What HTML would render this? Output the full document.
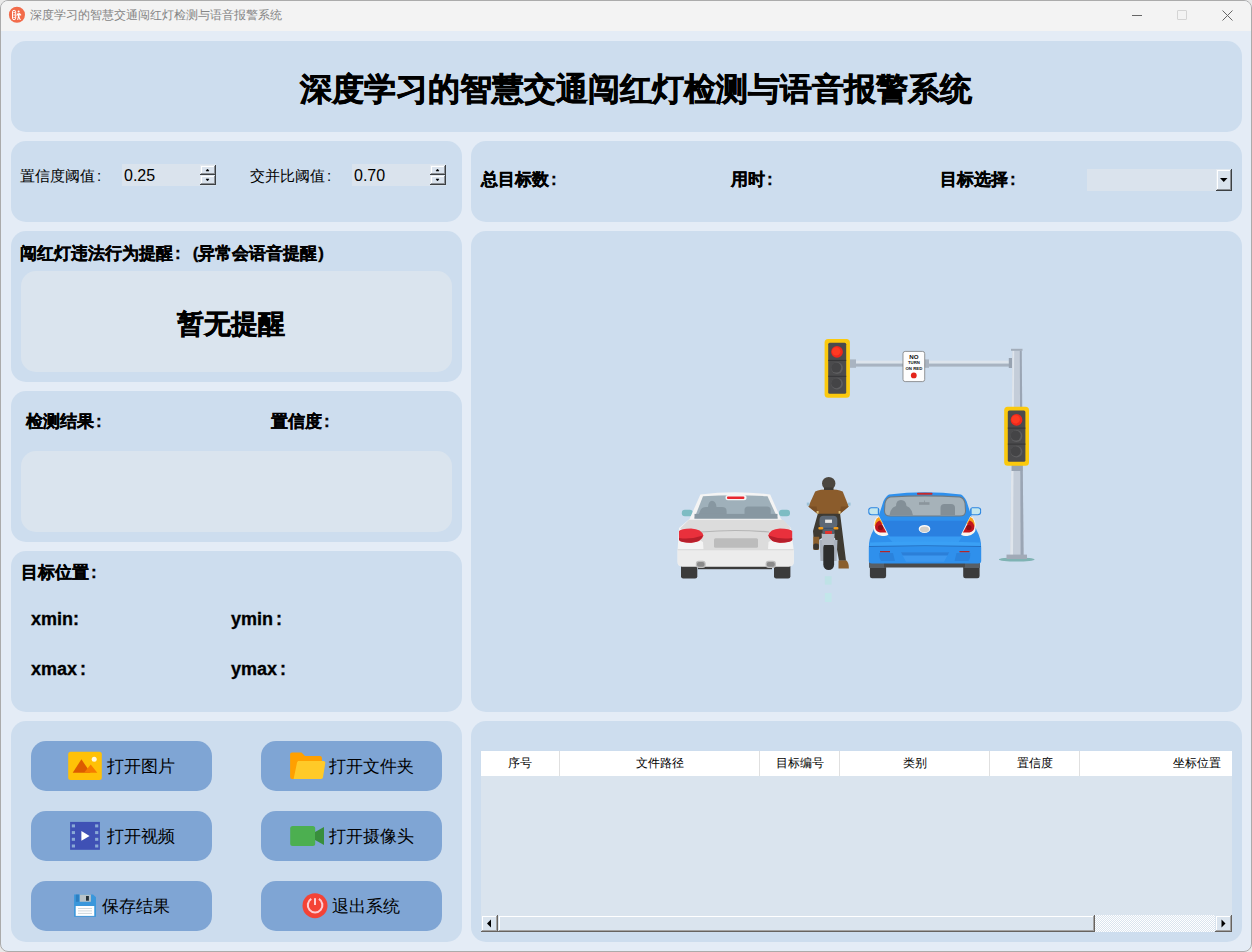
<!DOCTYPE html>
<html><head><meta charset="utf-8">
<style>
*{box-sizing:border-box;margin:0;padding:0}
html,body{width:1252px;height:952px;overflow:hidden;background:#e9e9e9}
body{font-family:"Liberation Sans",sans-serif;position:relative;color:#000}
.win{position:absolute;left:0;top:0;width:1252px;height:952px;border:1px solid #ababab;border-radius:8px;background:#e4ecf6;overflow:hidden}
.titlebar{position:absolute;left:0;top:0;width:1250px;height:30px;background:#f3f3f3}
.ab{position:absolute}
.panel{position:absolute;background:#cdddee;border-radius:15px}
.inner{position:absolute;background:#dae4ee;border-radius:15px}
.lbl{position:absolute;white-space:nowrap;line-height:1}
.b{font-weight:bold;-webkit-text-stroke:0.3px #000}
.c{margin-left:2px}
.btn{position:absolute;width:181px;height:50px;background:#7fa5d4;border-radius:15px}

.spin{position:absolute;width:94px;height:22px;background:#dae3ed}
.spin span{position:absolute;left:2px;top:4px;font-size:16px;line-height:1}
.combo{position:absolute;width:145px;height:22px;background:#dae3ed}
.bt{font-size:17px}
.thead{position:absolute;left:0;top:0;width:832px;height:25px;background:#fff}
.th{position:absolute;top:0;height:25px;font-size:12px;line-height:25px;text-align:center;border-right:1px solid #e0e0e0}
.hscroll{position:absolute;left:481px;top:915px;width:751px;height:17px;background-color:#fff;background-image:linear-gradient(45deg,#dae4ee 25%,transparent 25%,transparent 75%,#dae4ee 75%),linear-gradient(45deg,#dae4ee 25%,transparent 25%,transparent 75%,#dae4ee 75%);background-size:2px 2px;background-position:0 0,1px 1px}
.sbtn{position:absolute;top:0;width:17px;height:17px;background:#dae4ee;box-shadow:inset -1px -1px #67635f,inset 1px 1px #dae4ee,inset -2px -2px #a3a3a3,inset 2px 2px #fff}
.thumb{position:absolute;left:17px;top:0;width:597px;height:17px;background:#dae4ee;box-shadow:inset -1px -1px #67635f,inset 1px 1px #dae4ee,inset -2px -2px #a3a3a3,inset 2px 2px #fff}
.w3d{position:absolute;background:#dae3ed;box-shadow:inset -1px -1px #3c4043,inset 1px 1px #e2e9f0,inset -2px -2px #8d9196,inset 2px 2px #fff}
.sb{position:absolute;left:78px;width:16px;height:11px}
</style></head><body>
<div class="win">
  <div class="titlebar">
    <svg class="ab" style="left:-1px;top:-1px" width="40" height="30"><circle cx="16.95" cy="14.75" r="8.05" fill="#f26b4a"/><rect x="12.5" y="10.3" width="3.2" height="9.4" rx="1.6" fill="none" stroke="#fff" stroke-width="1"/><g fill="#fff"><circle cx="14.1" cy="12.6" r=".75"/><circle cx="14.1" cy="15" r=".75"/><circle cx="14.1" cy="17.4" r=".75"/><circle cx="18.6" cy="11.4" r="1"/><path d="M17.2 13.6l2.6-.5 1.6 1.9-.7.7-1-.9-.3 2 1.5 3.2h-1.1l-1.1-2.2-.5 2.2h-1l.7-3.4v-1.6l-.9.9-.6-.5z"/></g></svg>
    <div class="lbl" style="left:29px;top:8px;font-size:12px;color:#858585">深度学习的智慧交通闯红灯检测与语音报警系统</div>
    <div class="ab" style="left:1131px;top:14px;width:10px;height:1px;background:#666"></div>
    <div class="ab" style="left:1176px;top:9px;width:10px;height:10px;border:1px solid #d4d4d4;border-radius:1px"></div><svg class="ab" style="left:1221px;top:9px" width="12" height="12"><path d="M.5 .5L10.5 10.5M10.5 .5L.5 10.5" stroke="#666" stroke-width="1"/></svg>
  </div>
</div>
<div class="panel" style="left:11px;top:41px;width:1231px;height:91px"></div>
<div class="lbl b" style="left:300px;top:73px;font-size:32px;-webkit-text-stroke:0.6px #000">深度学习的智慧交通闯红灯检测与语音报警系统</div>

<div class="panel" style="left:11px;top:141px;width:451px;height:81px"></div>
<div class="panel" style="left:471px;top:141px;width:771px;height:81px"></div>
<div class="panel" style="left:11px;top:231px;width:451px;height:151px"></div>
<div class="inner" style="left:21px;top:271px;width:431px;height:101px"></div>
<div class="panel" style="left:11px;top:391px;width:451px;height:151px"></div>
<div class="inner" style="left:21px;top:451px;width:431px;height:81px"></div>
<div class="panel" style="left:11px;top:551px;width:451px;height:161px"></div>
<div class="panel" style="left:11px;top:721px;width:451px;height:221px"></div>
<div class="panel" style="left:471px;top:231px;width:771px;height:481px"></div>
<div class="panel" style="left:471px;top:721px;width:771px;height:221px"></div>

<div class="btn" style="left:31px;top:741px"></div>
<div class="btn" style="left:261px;top:741px"></div>
<div class="btn" style="left:31px;top:811px"></div>
<div class="btn" style="left:261px;top:811px"></div>
<div class="btn" style="left:31px;top:881px"></div>
<div class="btn" style="left:261px;top:881px"></div>

<!-- scene -->
<svg class="ab" style="left:0;top:0" width="1252" height="952" viewBox="0 0 1252 952">
 <!-- lane marks -->
 <rect x="824.8" y="576.2" width="6.8" height="8.4" fill="#bfe2e6"/>
 <rect x="824.8" y="593" width="6.8" height="9" fill="#c3e6ea"/>
 <!-- pole -->
 <path d="M1012.5 350.5H1021.7L1023.6 555H1010.2Z" fill="#c4cdd9"/>
 <path d="M1012.5 350.5H1014.2L1013 555H1010.2Z" fill="#dfe5ec"/>
 <path d="M1019.8 350.5H1021.7L1023.6 555H1020.6Z" fill="#9aa5b4"/>
 <rect x="1011" y="348.8" width="11.5" height="2" fill="#a3adba"/>
 <rect x="1011.5" y="465" width="11" height="6" fill="#98a3b1"/>
 <ellipse cx="1016.7" cy="559.5" rx="17.8" ry="2.1" fill="#7fb3b3"/>
 <rect x="1006.5" y="554.6" width="20.5" height="4.4" fill="#a1aab7"/>
 <!-- arm -->
 <rect x="850" y="360.7" width="161" height="3.1" fill="#dde4ec"/>
 <rect x="850" y="363.6" width="161" height="3" fill="#a8b3c1"/>
 <rect x="850" y="359.4" width="6" height="8.4" fill="#a9b4c1"/>
 <rect x="924.5" y="359.4" width="4.5" height="8.4" fill="#a9b4c1"/>
 <rect x="1008.8" y="358" width="3.2" height="10" fill="#98a3b1"/>
 <!-- left traffic light -->
 <rect x="824.6" y="339" width="25.3" height="58.8" rx="3.5" fill="#fbc90d"/>
 <rect x="828.2" y="342.7" width="18" height="51.1" rx="1.5" fill="#4b4b4d"/>
 <rect x="828.2" y="359.9" width="18" height="1" fill="#353537"/>
 <rect x="828.2" y="375.8" width="18" height="1" fill="#353537"/>
 <circle cx="837" cy="351.9" r="5.9" fill="#f0281c"/><circle cx="836.2" cy="351.4" r="4.2" fill="#ff3a22"/>
 <circle cx="837" cy="368" r="5.9" fill="#5e5e60"/><circle cx="836.2" cy="367.6" r="5" fill="#444446"/>
 <circle cx="837" cy="383.7" r="5.9" fill="#5e5e60"/><circle cx="836.2" cy="383.3" r="5" fill="#444446"/>
 <!-- sign -->
 <rect x="903" y="351.4" width="21.7" height="30.2" rx="2.2" fill="#fdfdfd" stroke="#6e6e6e" stroke-width="0.7"/>
 <text x="913.9" y="358.6" font-family="Liberation Sans" font-weight="bold" font-size="6.2" text-anchor="middle" fill="#111">NO</text>
 <text x="913.9" y="364.3" font-family="Liberation Sans" font-weight="bold" font-size="4.3" text-anchor="middle" fill="#111">TURN</text>
 <text x="913.9" y="369.6" font-family="Liberation Sans" font-weight="bold" font-size="4.3" text-anchor="middle" fill="#111">ON RED</text>
 <circle cx="913.8" cy="375.4" r="2.9" fill="#e3231a"/>
 <!-- right traffic light -->
 <rect x="1004.2" y="406.7" width="24.8" height="59.1" rx="3.5" fill="#fbc90d"/>
 <rect x="1007.8" y="410.4" width="17.6" height="51.4" rx="1.5" fill="#4b4b4d"/>
 <rect x="1007.8" y="427.6" width="17.6" height="1" fill="#353537"/>
 <rect x="1007.8" y="443.6" width="17.6" height="1" fill="#353537"/>
 <circle cx="1016.5" cy="419.9" r="5.9" fill="#f0281c"/><circle cx="1015.7" cy="419.4" r="4.2" fill="#ff3a22"/>
 <circle cx="1016.5" cy="436" r="5.9" fill="#5e5e60"/><circle cx="1015.7" cy="435.6" r="5" fill="#444446"/>
 <circle cx="1016.5" cy="451.7" r="5.9" fill="#5e5e60"/><circle cx="1015.7" cy="451.3" r="5" fill="#444446"/>

 <!-- WHITE CAR -->
 <rect x="681" y="563" width="16.3" height="15.5" rx="2.2" fill="#3b3b3b"/>
 <rect x="774" y="563" width="16.4" height="15.5" rx="2.2" fill="#3b3b3b"/>
 <rect x="698" y="565" width="74" height="4.2" fill="#3a3a3a"/>
 <rect x="681.8" y="509.8" width="11" height="6.5" rx="3" fill="#7dbcc3"/>
 <rect x="779" y="509.8" width="11" height="6.5" rx="3" fill="#7dbcc3"/>
 <path d="M700.4 494.5Q735 490 770.2 494.5L781 519L791 528L793.7 549.7V562Q793.7 566.4 789 566.4H682Q677.6 566.4 677.6 562V549.7L679 528L689.5 519Z" fill="#f4f4f4"/>
 <path d="M703 496.2Q735 494.2 767.5 496.2L777.8 518.6H694.3Z" fill="#9fb0ba"/>
 <path d="M697 518.6L700.5 510Q702 507 706 507H708Q708.5 501 712 500.8Q716 501 716.5 507H722Q726.6 507 726.6 511V513.9H697Z" fill="#8797a1"/><rect x="694.5" y="513.9" width="83" height="4.7" fill="#8797a1"/>
 <path d="M744.5 513.9V510Q744.5 506.5 748 506.5H767Q770.7 506.5 770.7 510V513.9Z" fill="#8797a1"/>
 <rect x="725.5" y="495" width="21" height="5.3" rx="2.5" fill="#f4f4f4"/>
 <rect x="727" y="496.5" width="17.4" height="2.4" rx="1" fill="#e8262e"/>
 <path d="M689 519.7H783.3L791 528.5L768.5 542L768 549.5H703.5L703 542L680 528.5Z" fill="#dcdcdc"/>
 <path d="M701 532Q735 529 769 532" stroke="#b5b5b5" stroke-width="1.2" fill="none"/>
 <path d="M679 531Q681 528.4 691 528.4Q702 529 703.4 535.5Q702 542 691 542.8Q681 542.8 679 540Z" fill="#e9303c"/>
 <path d="M679 538Q690 540 703 535.6Q701 542 691 542.8Q681 542.8 679 540Z" fill="#b71f2b"/>
 <path d="M792.2 531Q790 528.4 780 528.4Q769.7 529 768.3 535.5Q769.7 542 780 542.8Q790 542.8 792.2 540Z" fill="#e9303c"/>
 <path d="M792.2 538Q781 540 768.5 535.6Q770 542 780 542.8Q790 542.8 792.2 540Z" fill="#b71f2b"/>
 <rect x="714" y="538.3" width="44" height="9.4" rx="1.5" fill="#bcbcbc"/>
 <path d="M677.6 549.7H793.7V562Q793.7 566.4 789 566.4H682Q677.6 566.4 677.6 562Z" fill="#ececec"/>
 <rect x="677.6" y="549.2" width="116.1" height="1" fill="#d8d8d8"/>
 <rect x="695.8" y="560.8" width="9.9" height="7.1" rx="3" fill="#bdbdbd"/>
 <rect x="697" y="562" width="7.5" height="4.8" rx="2" fill="#8a8a8a"/>
 <rect x="765.6" y="560.8" width="10.4" height="7.1" rx="3" fill="#bdbdbd"/>
 <rect x="766.8" y="562" width="8" height="4.8" rx="2" fill="#8a8a8a"/>

 <!-- MOTORCYCLE -->
 <path d="M818 513H840L846 560.7H839L835 538L822 538L818.5 540L813.5 537L813 531Z" fill="#3e3a32"/>
 <path d="M813.2 536.8H819.2L819 549.5Q816 550.5 813.2 549.5Z" fill="#8a5f2e"/>
 <rect x="813.3" y="543.5" width="5.6" height="6.3" rx="2" fill="#3a3631"/>
 <path d="M838.5 560.6H846.5Q849 563 848.8 568.6H838.5Z" fill="#8a5f2e"/>
 <path d="M819.5 540H837.5L836.5 561H820.5Z" fill="#a9b1bd"/>
 <rect x="823.3" y="542.3" width="10.8" height="27.7" rx="5.4" fill="#2e2e2e"/>
 <path d="M821.6 533.5H834.6L834 545H822.2Z" fill="#b3b9c3"/>
 <rect x="819.5" y="515.8" width="17.8" height="12.5" rx="4" fill="#5d6875"/>
 <rect x="825.1" y="519.6" width="6.9" height="3.3" fill="#e4e4e4"/>
 <rect x="818.4" y="527.6" width="20" height="1" fill="#3d5a80"/>
 <rect x="818.4" y="527.1" width="4.9" height="2.4" rx="1" fill="#f29b1b"/>
 <rect x="833.5" y="527.1" width="4.9" height="2.4" rx="1" fill="#f29b1b"/>
 <rect x="822.5" y="529" width="12" height="5" rx="1.5" fill="#56606b"/>
 <rect x="825.1" y="531" width="6.9" height="2.9" fill="#e5322d"/>
 <path d="M815.2 491.5Q820 489.3 828.7 489.3Q837.5 489.3 842.7 491.5L848.7 506.6L840 513.7H817.5L808.4 506.6Z" fill="#8b5c2c"/>
 <path d="M816.5 506.6L818 513.7H817.5L808.4 506.6Z" fill="#7a4f25"/>
 <path d="M841 506.6L839.5 513.7H840L848.7 506.6Z" fill="#7a4f25"/>
 <rect x="816.6" y="511" width="2" height="2.6" fill="#dcc07a"/>
 <rect x="838.6" y="511" width="2" height="2.6" fill="#dcc07a"/>
 <rect x="806.8" y="502.6" width="2.6" height="3" fill="#9cc3da"/>
 <rect x="848" y="502.6" width="2.6" height="3" fill="#9cc3da"/>
 <ellipse cx="828.7" cy="483.4" rx="6.7" ry="6.5" fill="#4b463f"/>
 <rect x="824" y="487.5" width="9.5" height="2.5" fill="#3d3933"/>
 <!-- BLUE CAR -->
 <rect x="869.9" y="563" width="16.2" height="15.3" rx="2.2" fill="#3b3b3b"/>
 <rect x="963.2" y="563" width="16.4" height="15.3" rx="2.2" fill="#3b3b3b"/>
 <rect x="869" y="560" width="17" height="8" rx="1" fill="#595f65"/>
 <rect x="963" y="560" width="17" height="8" rx="1" fill="#595f65"/>
 <rect x="884" y="563" width="81" height="4.5" fill="#4a4a4a"/>
 <path d="M868.3 509.5Q868.3 507.5 871 507.3H877Q879.3 507.5 879.3 510V515.2H871.5Q868.3 515 868.3 512.5Z" fill="#2a84e0"/>
 <path d="M869.3 510Q869.5 508.3 871.3 508.3H877.8V514.2H871.5Q869.3 514 869.3 512Z" fill="#c4e7ee"/>
 <path d="M981.1 509.5Q981.1 507.5 978.4 507.3H972.4Q970.1 507.5 970.1 510V515.2H977.9Q981.1 515 981.1 512.5Z" fill="#2a84e0"/>
 <path d="M980.1 510Q979.9 508.3 978.1 508.3H971.6V514.2H977.9Q980.1 514 980.1 512Z" fill="#c4e7ee"/>
 <path d="M889 494.5Q925 490 961 494.5Q964 496 966.5 501L972 518L976.5 530Q981.2 538 981.2 548V561Q981.2 563.5 978 563.5H872Q868.8 563.5 868.8 561V548Q868.8 538 873.5 530L878 518L883.5 501Q886 496 889 494.5Z" fill="#2f90ec"/>
 <path d="M890 496.6Q925 494 960 496.6Q964.5 497.5 965.5 503L966 511Q966 516.5 960 516.5H890Q884 516.5 884 511L884.5 503Q885.5 497.5 890 496.6Z" fill="#6f7a82"/>
 <path d="M890.5 497.6Q925 495.2 959.5 497.6Q963.5 498.5 964.5 503.5L965 511Q965 515.5 960 515.5H890Q885 515.5 885 511L885.5 503.5Q886.5 498.5 890.5 497.6Z" fill="#a6b2b9"/>
 <path d="M889.5 515.5Q890 508 896 506Q896 500 901 500Q906 500 906.5 506Q912 508 913 515.5Z" fill="#838f97"/>
 <path d="M940.5 515.5V508Q940.5 504 944.5 504H951Q955 504 955 508V515.5Z" fill="#838f97"/>
 <rect x="919" y="502.2" width="10.5" height="2.6" fill="#8a959c"/>
 <rect x="924" y="500.5" width=".8" height="2" fill="#8a959c"/>
 <rect x="917" y="492.8" width="15.5" height="2" rx=".8" fill="#c62828"/>
 <path d="M882 520.7H967L958.6 542.2H892.5Z" fill="#2a80e0"/>
 <path d="M887.5 536.5H962L958.6 542.2H892.5Z" fill="#389cf3"/>
 <path d="M870 542.5Q925 540.5 980 542.5L980.8 546.5H869.2Z" fill="#3aa0f5"/>
 <path d="M869 546.5Q925 545 981 546.5" stroke="#2370c4" stroke-width="1" fill="none"/>
 <path d="M873.6 527Q873.6 518 879 516L888.3 534.5Q887 536 882 536Q873.6 535 873.6 527Z" fill="#fbf6ee"/>
 <path d="M874.6 526Q875 518.5 879 517L883 524Z" fill="#f6a21e"/>
 <path d="M875 526.5Q876 521.5 880 520.5L886.5 532.5H880Q875 531.5 875 526.5Z" fill="#c3141d"/>
 <circle cx="880.5" cy="527.5" r="2.6" fill="#8e0d12"/>
 <path d="M975.8 527Q975.8 518 970.4 516L961.1 534.5Q962.4 536 967.4 536Q975.8 535 975.8 527Z" fill="#fbf6ee"/>
 <path d="M974.8 526Q974.4 518.5 970.4 517L966.4 524Z" fill="#f6a21e"/>
 <path d="M974.4 526.5Q973.4 521.5 969.4 520.5L962.9 532.5H969.4Q974.4 531.5 974.4 526.5Z" fill="#c3141d"/>
 <circle cx="968.9" cy="527.5" r="2.6" fill="#8e0d12"/>
 <ellipse cx="924.5" cy="528.9" rx="5.8" ry="4" fill="#fafafa"/>
 <ellipse cx="924.5" cy="529.3" rx="4.6" ry="2.9" fill="#d2cfc8"/>
 <path d="M900.9 552.2H949.2L944 561.7H906Z" fill="#3c98f0"/>
 <path d="M900.9 552.2H949.2L947.5 555.5H902.7Z" fill="#2b7fd8"/>
 <path d="M879 553H893L895 561H881Q879 558 879 553Z" fill="#2a82dc"/>
 <path d="M970.5 553H956.5L954.5 561H968.5Q970.5 558 970.5 553Z" fill="#2a82dc"/>
 <rect x="880" y="551" width="10" height="1.3" fill="#b0272b"/>
 <rect x="959.5" y="551" width="10" height="1.3" fill="#b0272b"/>
</svg>

<!-- row2 left -->
<div class="lbl" style="left:20px;top:168px;font-size:15px">置信度阈值<span class="c">:</span></div>
<div class="spin" style="left:122px;top:164px"><span>0.25</span><div class="sb w3d" style="top:1px;height:10px"><svg width="16" height="10" style="position:absolute;left:0;top:0"><path d="M6 6h3l-1.5-2z" fill="#000" stroke="#000" stroke-width=".5"/></svg></div><div class="sb w3d" style="top:11px;height:10px"><svg width="16" height="10" style="position:absolute;left:0;top:0"><path d="M6 4h3l-1.5 2z" fill="#000" stroke="#000" stroke-width=".5"/></svg></div></div>
<div class="lbl" style="left:250px;top:168px;font-size:15px">交并比阈值<span class="c">:</span></div>
<div class="spin" style="left:352px;top:164px"><span>0.70</span><div class="sb w3d" style="top:1px;height:10px"><svg width="16" height="10" style="position:absolute;left:0;top:0"><path d="M6 6h3l-1.5-2z" fill="#000" stroke="#000" stroke-width=".5"/></svg></div><div class="sb w3d" style="top:11px;height:10px"><svg width="16" height="10" style="position:absolute;left:0;top:0"><path d="M6 4h3l-1.5 2z" fill="#000" stroke="#000" stroke-width=".5"/></svg></div></div>
<!-- row2 right -->
<div class="lbl b" style="left:481px;top:171px;font-size:17px">总目标数<span class="c">:</span></div>
<div class="lbl b" style="left:731px;top:171px;font-size:17px">用时<span class="c">:</span></div>
<div class="lbl b" style="left:940px;top:171px;font-size:17px">目标选择<span class="c">:</span></div>
<div class="combo" style="left:1087px;top:169px"><div class="w3d" style="left:129px;top:0;width:16px;height:22px"><svg width="16" height="22" style="position:absolute;left:0;top:0"><path d="M4 9h7.5l-3.75 4z" fill="#000"/></svg></div></div>
<!-- alert -->
<div class="lbl b" style="left:20px;top:245px;font-size:17px">闯红灯违法行为提醒<span class="c">:</span><span style="margin-left:12px">(</span>异常会语音提醒<span style="margin-left:1px">)</span></div>
<div class="lbl b" style="left:177px;top:311px;font-size:27px;-webkit-text-stroke:0.5px #000">暂无提醒</div>
<!-- detection -->
<div class="lbl b" style="left:26px;top:413px;font-size:17px">检测结果<span class="c">:</span></div>
<div class="lbl b" style="left:271px;top:413px;font-size:17px">置信度<span class="c">:</span></div>
<!-- target -->
<div class="lbl b" style="left:21px;top:564px;font-size:17px">目标位置<span class="c">:</span></div>
<div class="lbl b" style="left:31px;top:610px;font-size:18px">xmin:</div>
<div class="lbl b" style="left:231px;top:610px;font-size:18px">ymin<span style="margin-left:3px">:</span></div>
<div class="lbl b" style="left:31px;top:660px;font-size:18px">xmax<span style="margin-left:3px">:</span></div>
<div class="lbl b" style="left:231px;top:660px;font-size:18px">ymax<span style="margin-left:3px">:</span></div>

<svg class="ab" style="left:0;top:0" width="1252" height="952" viewBox="0 0 1252 952">
 <!-- image icon -->
 <rect x="68.2" y="751.8" width="33.6" height="28.3" rx="2.5" fill="#ffc107"/>
 <circle cx="94.2" cy="759.3" r="2.5" fill="#fff8e1"/>
 <path d="M72.7 772.8L81.4 759.3L90.5 772.8Z" fill="#dd5b00"/>
 <path d="M84 772.8L90.7 764.6L97.3 772.8Z" fill="#f57c00"/>
 <!-- folder -->
 <path d="M292 752.5h9.5l3.5 3.4h15c1 0 1.9.8 1.9 1.9V777c0 1.1-.9 2-2 2H292c-1.1 0-1.9-.9-1.9-2V754.4c0-1.1.8-1.9 1.9-1.9z" fill="#ffa000"/>
 <path d="M299 761h24.5c1.2 0 2 1 1.8 2.1L323 777.3c-.2 1-1 1.7-2 1.7H293.6L297 762.7c.2-1 1-1.7 2-1.7z" fill="#ffca28"/>
 <!-- video -->
 <rect x="70.1" y="821.9" width="29.8" height="27.9" fill="#3f51b5"/>
 <g fill="#8aaad6">
  <rect x="71.8" y="824.4" width="3.2" height="3"/><rect x="71.8" y="831.1" width="3.2" height="3"/><rect x="71.8" y="837.8" width="3.2" height="3"/><rect x="71.8" y="844.5" width="3.2" height="3"/>
  <rect x="95.1" y="824.4" width="3.2" height="3"/><rect x="95.1" y="831.1" width="3.2" height="3"/><rect x="95.1" y="837.8" width="3.2" height="3"/><rect x="95.1" y="844.5" width="3.2" height="3"/>
 </g>
 <path d="M81.4 831.1V840.8L89.6 836Z" fill="#fff"/>
 <!-- camera -->
 <rect x="290.2" y="825.9" width="25" height="20.1" rx="2.5" fill="#4caf50"/>
 <path d="M315 832L324 826.9V845L315 840.1Z" fill="#388e3c"/>
 <!-- save -->
 <path d="M74.1 894.6H93L96 897.3V916.75H74.1Z" fill="#3a97db"/>
 <rect x="75.9" y="894.6" width="3" height="7.15" fill="#2d7fc1"/>
 <rect x="79.8" y="894.6" width="11.1" height="7.15" fill="#b8c2c8"/>
 <rect x="86" y="896" width="2.9" height="4.7" fill="#263238"/>
 <rect x="75.7" y="906" width="18.55" height="9.9" fill="#fff"/>
 <g fill="#cfd8dc"><rect x="78" y="908" width="14" height="1"/><rect x="78" y="910.4" width="14" height="1"/><rect x="78" y="912.9" width="14" height="1"/></g>
 <!-- power -->
 <circle cx="315" cy="905.7" r="12.5" fill="#f44336"/>
 <path d="M311.3 898.9A7.3 7.3 0 1 0 318.9 898.9" fill="none" stroke="#ffcdd2" stroke-width="2.1"/>
 <rect x="314" y="898.2" width="2" height="6.8" fill="#ffcdd2"/>
</svg>
<!-- button labels -->
<div class="lbl bt" style="left:107px;top:758px">打开图片</div>
<div class="lbl bt" style="left:329px;top:758px">打开文件夹</div>
<div class="lbl bt" style="left:107px;top:828px">打开视频</div>
<div class="lbl bt" style="left:329px;top:828px">打开摄像头</div>
<div class="lbl bt" style="left:102px;top:898px">保存结果</div>
<div class="lbl bt" style="left:332px;top:898px">退出系统</div>
<!-- table -->
<div class="ab" style="left:481px;top:751px;width:751px;height:164px;background:#dae4ee;overflow:hidden">
  <div class="thead">
    <div class="th" style="left:0;width:79px">序号</div>
    <div class="th" style="left:80px;width:199px">文件路径</div>
    <div class="th" style="left:280px;width:79px">目标编号</div>
    <div class="th" style="left:360px;width:149px">类别</div>
    <div class="th" style="left:510px;width:89px">置信度</div>
    <div class="th" style="left:600px;width:232px">坐标位置</div>
  </div>
</div>
<div class="hscroll">
  <div class="sbtn" style="left:0"><svg width="17" height="17" style="position:absolute;left:0;top:0"><path d="M10 4.5v8l-4-4z" fill="#000"/></svg></div>
  <div class="thumb"></div>
  <div class="sbtn" style="left:734px"><svg width="17" height="17" style="position:absolute;left:0;top:0"><path d="M6.5 4.5v8l4-4z" fill="#000"/></svg></div>
</div>
</body></html>
